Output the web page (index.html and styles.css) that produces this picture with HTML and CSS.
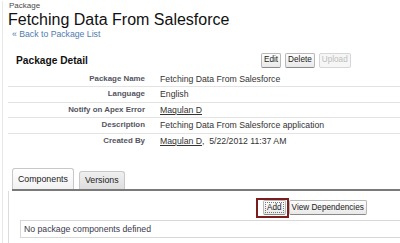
FILE: index.html
```html
<!DOCTYPE html>
<html lang="en">
<head>
  <meta charset="UTF-8" />
  <title>Fetching Data From Salesforce</title>
  <link rel="stylesheet" href="styles.css">
</head>
<body>

  <div class="page">
    <div class="crumb">Package</div>
    <h1>Fetching Data From Salesforce</h1>
    <a class="back" href="#">&laquo; Back to Package List</a>

    <div class="detail">
      <div class="detail-head">
        <h2>Package Detail</h2>
        <div class="btns">
          <button class="btn">Edit</button>
          <button class="btn">Delete</button>
          <button class="btn off" disabled>Upload</button>
        </div>
      </div>

      <div class="rows">
        <div class="row">
          <div class="lbl">Package Name</div>
          <div class="val">Fetching Data From Salesforce</div>
        </div>
        <div class="row">
          <div class="lbl">Language</div>
          <div class="val">English</div>
        </div>
        <div class="row">
          <div class="lbl">Notify on Apex Error</div>
          <div class="val"><a href="#">Maqulan D</a></div>
        </div>
        <div class="row">
          <div class="lbl">Description</div>
          <div class="val">Fetching Data From Salesforce application</div>
        </div>
        <div class="row">
          <div class="lbl">Created By</div>
          <div class="val"><a href="#">Maqulan D</a>,&nbsp; 5/22/2012 11:37 AM</div>
        </div>
      </div>
    </div>

    <div class="tabs">
      <div class="tab on">Components</div>
      <div class="tab">Versions</div>
    </div>

    <div class="tab-body">
      <div class="tab-btns">
        <span class="hl">
          <button class="btn add">Add</button>
          <span class="mark"></span>
        </span>
        <button class="btn">View Dependencies</button>
      </div>
      <div class="empty">No package components defined</div>
    </div>
  </div>

</body>
</html>
```

FILE: styles.css
```css
body {
  margin: 0;
  font-family: 'Liberation Sans', Arial, sans-serif;
  color: #333;
  background: #fff;
}

.page {
  min-height: 243px;
  margin-left: 2px;
  padding-left: 5px;
  border-left: 1px solid #e8e8e8;
}

.crumb {
  font-size: 8px;
  line-height: 10px;
  color: #4a4a4a;
  margin-top: 1px;
  padding-left: 1px;
}

h1 {
  margin: 0;
  font-size: 16px;
  font-weight: normal;
  line-height: 18px;
  color: #111;
}

.back {
  display: block;
  font-size: 8.7px;
  line-height: 10px;
  color: #4f7bae;
  text-decoration: none;
  padding-left: 4px;
}

.detail {
  margin-top: 12px;
}

.detail-head {
  display: flex;
  align-items: center;
  height: 18px;
}

.detail-head h2 {
  width: 245px;
  margin: 0;
  padding-left: 8px;
  font-size: 10.2px;
  font-weight: bold;
  color: #111;
}

.btns {
  display: flex;
  gap: 4px;
}

.btn {
  font-family: 'Liberation Sans', Arial, sans-serif;
  font-size: 8.2px;
  height: 15px;
  line-height: 12px;
  padding: 0 2px;
  color: #222;
  background: linear-gradient(#fdfdfd, #e9e9e9);
  border: 1px solid #b8b8b8;
  border-bottom-color: #8a8a8a;
  border-radius: 2px;
}

.btn.off {
  color: #bdbdbd;
  border-color: #d6d6d6;
  background: #f6f6f6;
}

.rows {
  margin-top: 2.75px;
}

.row {
  display: flex;
  align-items: center;
  padding: 2px 0;
  line-height: 10.5px;
  border-bottom: 1px solid #e3e3e3;
}

.row:last-child {
  border-bottom: none;
}

.lbl {
  width: 137px;
  text-align: right;
  font-size: 7.9px;
  font-weight: bold;
  color: #55555f;
}

.val {
  padding-left: 15px;
  font-size: 8.7px;
  color: #333;
}

.val a {
  color: #333;
}

.tabs {
  display: flex;
  align-items: flex-end;
  gap: 5px;
  margin-top: 19.75px;
  margin-left: 4px;
  border-bottom: 2px solid #7a7a7a;
}

.tab {
  font-size: 8.8px;
  line-height: 17px;
  padding: 0 5px;
  color: #222;
  background: linear-gradient(#f0f0f0, #dedede);
  border: 1px solid #c8c8c8;
  border-bottom: none;
  border-radius: 3px 3px 0 0;
}

.tab.on {
  line-height: 20px;
  background: linear-gradient(#ffffff, #f2f2f2);
}

.tab-body {
  border-left: 1px solid #dcdcdc;
  min-height: 60px;
}

.tab-btns {
  display: flex;
  gap: 3px;
  padding: 9px 0 0 254px;
}

.hl {
  position: relative;
  display: flex;
}

.add {
  padding: 0 3px;
  outline: 1px dotted #777;
  outline-offset: -3px;
}

.mark {
  position: absolute;
  left: -7px;
  top: -2px;
  right: -3px;
  bottom: -3px;
  border: 2px solid #7b1d1d;
}

.empty {
  margin: 5px 0 0 11px;
  height: 16px;
  line-height: 16px;
  padding-left: 3px;
  font-size: 8.7px;
  color: #3a3a4a;
  border: 1px solid #d8d8d8;
  border-right: none;
}
```
